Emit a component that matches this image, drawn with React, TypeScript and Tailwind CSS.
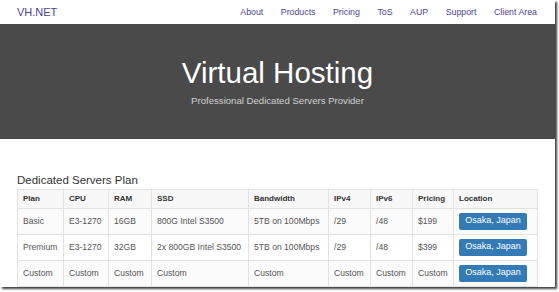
const navLinks = ['About', 'Products', 'Pricing', 'ToS', 'AUP', 'Support', 'Client Area'];

const plans = [
  { plan: 'Basic', cpu: 'E3-1270', ram: '16GB', ssd: '800G Intel S3500', bw: '5TB on 100Mbps', v4: '/29', v6: '/48', price: '$199' },
  { plan: 'Premium', cpu: 'E3-1270', ram: '32GB', ssd: '2x 800GB Intel S3500', bw: '5TB on 100Mbps', v4: '/29', v6: '/48', price: '$399' },
  { plan: 'Custom', cpu: 'Custom', ram: 'Custom', ssd: 'Custom', bw: 'Custom', v4: 'Custom', v6: 'Custom', price: 'Custom' },
];

const cols = [
  { label: 'Plan', w: 'w-[46px]' },
  { label: 'CPU', w: 'w-[45px]' },
  { label: 'RAM', w: 'w-[43px]' },
  { label: 'SSD', w: 'w-[97px]' },
  { label: 'Bandwidth', w: 'w-[80px]' },
  { label: 'IPv4', w: 'w-[42px]' },
  { label: 'IPv6', w: 'w-[42px]' },
  { label: 'Pricing', w: 'w-[41px]' },
  { label: 'Location', w: 'w-[84px]' },
];

export default function App() {
  return (
    <div className="w-[559px] h-[292px] bg-white font-['Liberation_Sans',Arial,sans-serif]">
      <div className="w-[555px] h-[287px] overflow-hidden bg-white shadow-[2px_2px_2px_rgba(0,0,0,0.75)]">
        <nav className="h-[24px] flex items-center justify-between pl-[17px] pr-[18px]">
          <span className="text-[11px] text-[#4b4393] leading-none">VH.NET</span>
          <div className="flex gap-[17.5px] text-[8.8px] text-[#4b4393] leading-none">
            {navLinks.map((l) => (
              <span key={l}>{l}</span>
            ))}
          </div>
        </nav>

        <header className="h-[115px] bg-[#4a4a4a] flex flex-col items-center pt-[34px]">
          <h1 className="text-[29.5px] leading-none text-white">Virtual Hosting</h1>
          <p className="mt-[8px] text-[9.6px] leading-none text-[#d0d0d0]">Professional Dedicated Servers Provider</p>
        </header>

        <section className="pl-[17px] pt-[36px]">
          <h2 className="text-[11.5px] leading-none text-[#333] mb-[2px]">Dedicated Servers Plan</h2>
          <table className="border-collapse text-[8.6px] text-[#555] w-[520px] table-fixed">
            <thead>
              <tr className="h-[19px] bg-[#f7f7f7]">
                {cols.map((c) => (
                  <th key={c.label} className={`${c.w} border border-[#e2e2e2] px-[5px] text-left text-[8px] font-bold text-[#333]`}>
                    {c.label}
                  </th>
                ))}
              </tr>
            </thead>
            <tbody>
              {plans.map((p, i) => (
                <tr key={p.plan} className={i % 2 === 0 ? 'h-[26px] bg-[#fbfbfb]' : 'h-[26px] bg-white'}>
                  <td className="border border-[#e2e2e2] px-[5px]">{p.plan}</td>
                  <td className="border border-[#e2e2e2] px-[5px]">{p.cpu}</td>
                  <td className="border border-[#e2e2e2] px-[5px]">{p.ram}</td>
                  <td className="border border-[#e2e2e2] px-[5px]">{p.ssd}</td>
                  <td className="border border-[#e2e2e2] px-[5px]">{p.bw}</td>
                  <td className="border border-[#e2e2e2] px-[5px]">{p.v4}</td>
                  <td className="border border-[#e2e2e2] px-[5px]">{p.v6}</td>
                  <td className="border border-[#e2e2e2] px-[5px]">{p.price}</td>
                  <td className="border border-[#e2e2e2] px-[5px]">
                    <span className="flex items-center justify-center w-[68px] h-[17px] rounded-[2px] bg-[#337ab7] text-white text-[9px]">
                      Osaka, Japan
                    </span>
                  </td>
                </tr>
              ))}
            </tbody>
          </table>
        </section>
      </div>
    </div>
  );
}
